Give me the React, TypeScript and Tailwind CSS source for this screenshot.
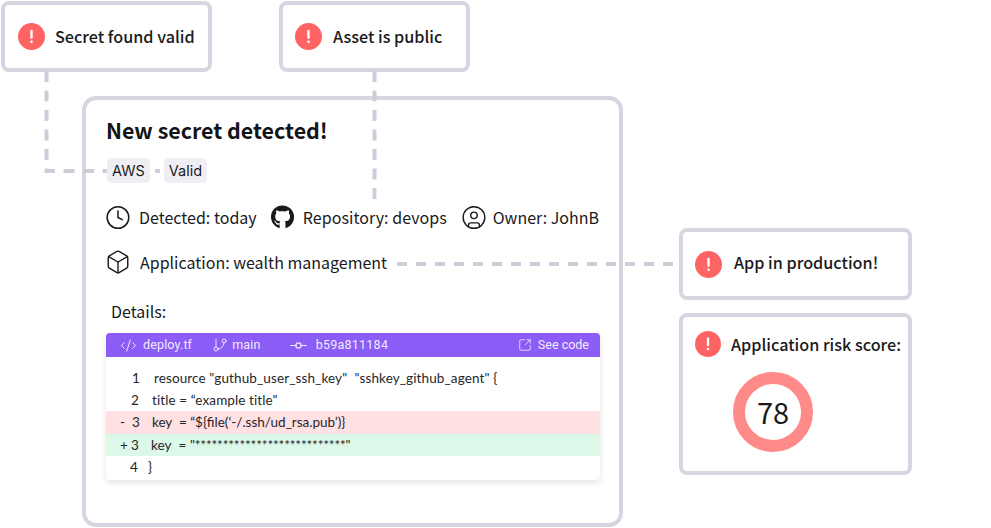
import type { ReactNode } from 'react';
import { GitBranch, GitCommitHorizontal, SquareArrowOutUpRight, Clock, CircleUser, Box, CodeXml } from 'lucide-react';
import { FaGithub } from 'react-icons/fa';

const sans = 'font-["Noto_Sans_CJK_JP","Noto_Sans",sans-serif]';

function Alert({ size = 27 }: { size?: number }) {
  return (
    <svg width={size} height={size} viewBox="0 0 27 27" className="shrink-0">
      <circle cx="13.5" cy="13.5" r="13.5" fill="#ff6464" />
      <rect x="12.3" y="6.8" width="2.4" height="9" rx="1" fill="#fff" />
      <rect x="12.3" y="17.6" width="2.4" height="2.5" rx="0.8" fill="#fff" />
    </svg>
  );
}

function Tag({ text }: { text: string }) {
  return <span className="rounded-[5px] bg-[#eeeef3] px-[5px] h-[25px] flex items-center text-[14.5px] text-[#1c1c1f] font-['Inter',sans-serif]">{text}</span>;
}

function CodeRow({ sign, num, text, bg, numX, textX }: { sign?: string; num: string; text: ReactNode; bg?: string; numX: string; textX: string }) {
  return (
    <div className={`relative h-[22.4px] flex items-center text-[13.5px] tracking-[0.1px] text-[#26262a] font-['Lato',sans-serif] ${bg ?? ''}`}>
      {sign && <span className="absolute left-[14px]">{sign}</span>}
      <span className={`${numX} shrink-0`}>{num}</span>
      <span className={`${textX} whitespace-pre`}>{text}</span>
    </div>
  );
}

export default function App() {
  return (
    <div className={`relative w-[991px] h-[528px] overflow-hidden bg-white text-[#1a1a1c] ${sans}`}>
      <div className="absolute left-[1px] top-[1px] w-[211px] h-[71px] rounded-[8px] border-[4px] border-[#d6d6e0] flex items-center pl-[13px] gap-[10px] text-[16.2px] font-medium">
        <Alert />
        <span>Secret found valid</span>
      </div>
      <div className="absolute left-[279px] top-[1px] w-[191px] h-[71px] rounded-[8px] border-[4px] border-[#d6d6e0] flex items-center pl-[12px] gap-[11px] text-[16.2px] font-medium">
        <Alert />
        <span>Asset is public</span>
      </div>

      <div className="absolute left-[82px] top-[96px] w-[541px] h-[431px] rounded-[14px] border-[4px] border-[#d6d6e0] pl-[20px] pr-[20px] pt-[15px]">
        <h1 className="text-[21.4px] font-bold leading-[30px] text-[#141416]">New secret detected!</h1>
        <div className="flex gap-[14px] mt-[13px] ml-[1px]">
          <Tag text="AWS" />
          <Tag text="Valid" />
        </div>
        <div className="flex items-center mt-[21px] h-[26px] text-[16px] whitespace-nowrap">
          <Clock size={27} strokeWidth={1.4} className="-ml-[1px]" />
          <span className="ml-[8px]">Detected: today</span>
          <FaGithub size={24} className="ml-[14px]" />
          <span className="ml-[9px] tracking-[0.05px]">Repository: devops</span>
          <CircleUser size={27} strokeWidth={1.3} className="ml-[14px]" />
          <span className="ml-[6px]">Owner: JohnB</span>
        </div>
        <div className="flex items-center mt-[19px] h-[26px] text-[16px] whitespace-nowrap">
          <Box size={26} strokeWidth={1.3} className="-ml-[1px]" />
          <span className="ml-[9px]">Application: wealth management</span>
        </div>
        <p className="mt-[23px] ml-[5px] text-[16px] leading-[26px]">Details:</p>
        <div className="mt-[9px] w-[494px] rounded-[4px] bg-white shadow-[0_3px_6px_rgba(30,30,60,0.12)] overflow-hidden">
          <div className="h-[24px] bg-[#8b5cf6] flex items-center text-[12.5px] text-[#f1ebff] font-['Roboto',sans-serif] pl-[14px] pr-[11px]">
            <CodeXml size={17} strokeWidth={1.4} />
            <span className="ml-[6px] tracking-[0.15px]">deploy.tf</span>
            <GitBranch size={16} strokeWidth={1.4} className="ml-[20px]" />
            <span className="ml-[4px] tracking-[0.2px]">main</span>
            <GitCommitHorizontal size={21} strokeWidth={1.4} className="ml-[27px]" />
            <span className="ml-[7px] tracking-[0.25px]">b59a811184</span>
            <SquareArrowOutUpRight size={14} strokeWidth={1.4} className="ml-auto" />
            <span className="ml-[6px]">See code</span>
          </div>
          <div className="pt-[9.5px] pb-[2px]">
            <CodeRow num="1" text={'resource "guthub_user_ssh_key"  "sshkey_github_agent" {'} numX="ml-[26px]" textX="ml-[14px] tracking-[0.12px]" />
            <CodeRow num="2" text={'title = “example title"'} numX="ml-[25px]" textX="ml-[13px]" />
            <CodeRow sign="-" num="3" text={'key  = “${file(‘-/.ssh/ud_rsa.pub’)}'} bg="bg-[#ffe0e3]" numX="ml-[26px]" textX="ml-[12px] tracking-[0px]" />
            <CodeRow sign="+" num="3" text={<>key  = <span className="tracking-[-0.15px]">"***************************"</span></>} bg="bg-[#dcf8e9]" numX="ml-[25px]" textX="ml-[12px]" />
            <CodeRow num="4" text="}" numX="ml-[24px]" textX="ml-[10px]" />
          </div>
        </div>
      </div>

      <div className="absolute left-[679px] top-[228px] w-[233px] h-[72px] rounded-[8px] border-[4px] border-[#d6d6e0] flex items-center pl-[12px] gap-[12px] text-[16.2px] font-medium">
        <Alert />
        <span className="-translate-y-[2px]">App in production!</span>
      </div>
      <div className="absolute left-[679px] top-[313px] w-[233px] h-[162px] rounded-[8px] border-[4px] border-[#d6d6e0] pl-[12px] pt-[14px]">
        <div className="flex items-center gap-[10px] text-[16.2px] font-medium whitespace-nowrap">
          <Alert size={26} />
          <span>Application risk score:</span>
        </div>
        <div className="ml-[38px] mt-[15px] w-[80px] h-[80px] rounded-full border-[12px] border-[#ff8a8a] flex items-center justify-center text-[29px] leading-none">
          <span className="-translate-y-[1px]">78</span>
        </div>
      </div>

      {/* connectors */}
      <svg className="absolute left-0 top-0 pointer-events-none" width="991" height="528" fill="none" stroke="#cdcdda" strokeWidth="4">
        <path d="M46.5 71V171H107" strokeDasharray="11 8.5" />
        <path d="M374.5 71V205" strokeDasharray="11 8.5" />
        <path d="M155 171H160" />
        <path d="M397 264H680" strokeDasharray="10 9" />
      </svg>
    </div>
  );
}
